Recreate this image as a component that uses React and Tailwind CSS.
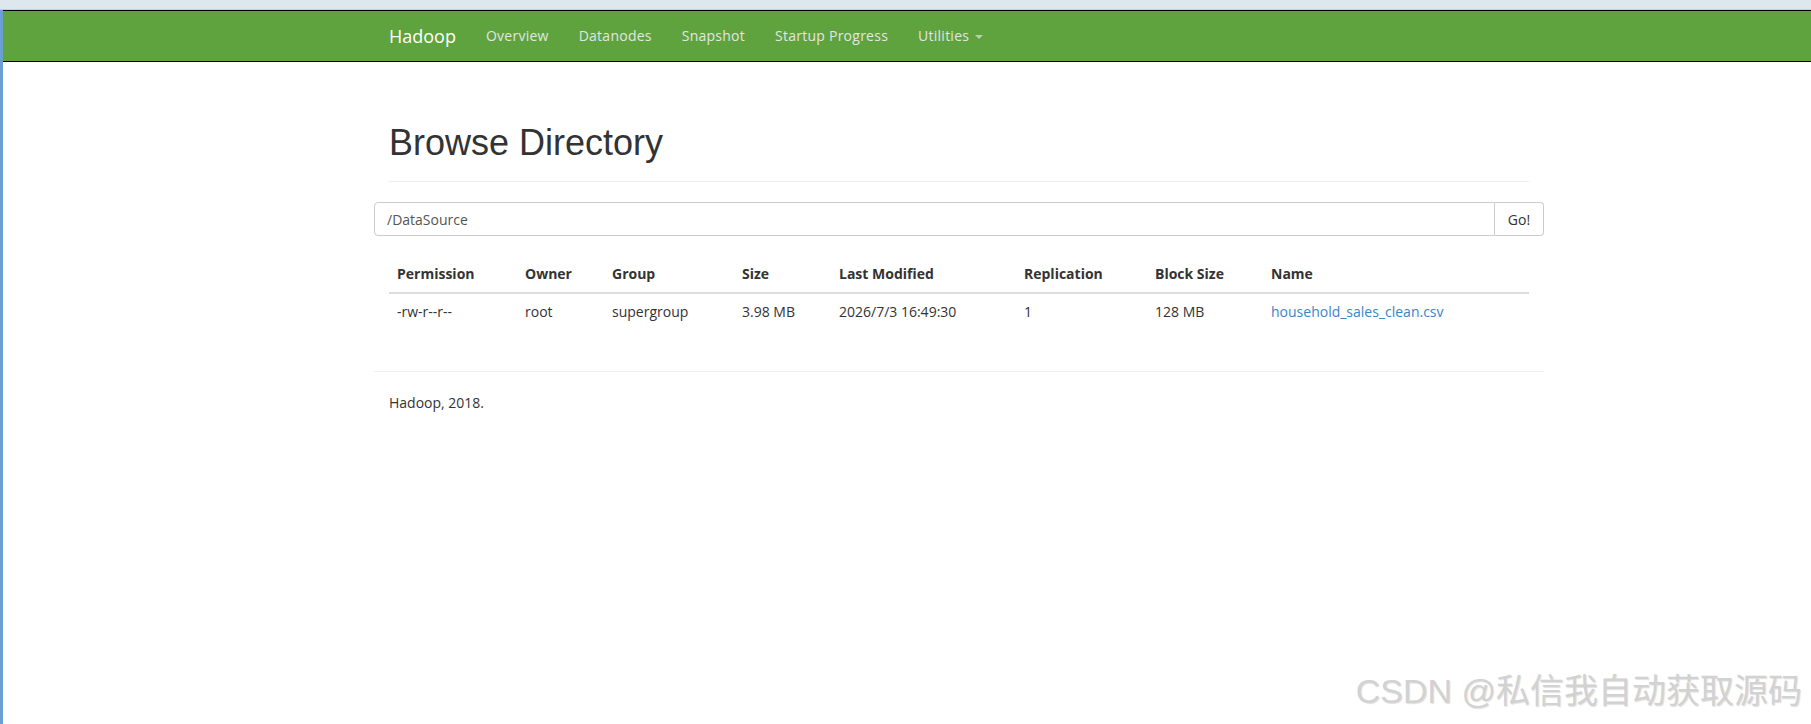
import React from 'react';

const navLinks = ['Overview', 'Datanodes', 'Snapshot', 'Startup Progress'];

const columns = [
  { label: 'Permission', w: 'w-[128px]' },
  { label: 'Owner', w: 'w-[87px]' },
  { label: 'Group', w: 'w-[130px]' },
  { label: 'Size', w: 'w-[97px]' },
  { label: 'Last Modified', w: 'w-[185px]' },
  { label: 'Replication', w: 'w-[131px]' },
  { label: 'Block Size', w: 'w-[116px]' },
  { label: 'Name', w: 'w-[266px]' },
];

const files = [
  {
    permission: '-rw-r--r--',
    owner: 'root',
    group: 'supergroup',
    size: '3.98 MB',
    modified: '2026/7/3 16:49:30',
    replication: '1',
    blockSize: '128 MB',
    name: 'household_sales_clean.csv',
  },
];

const App = () => {
  return (
    <div className="relative h-[724px] w-full overflow-hidden bg-white font-['Open_Sans',sans-serif] text-[14px] text-[#333]">
      {/* window chrome strip */}
      <div className="h-[10px] border-b border-[#c6ced6] bg-[#dfe7ee]"></div>

      <div className="flex h-[714px]">
        <div className="w-[3px] bg-[#6a9fd5]"></div>

        <div className="flex-1">
          {/* navbar */}
          <div className="h-[52px] border-y border-black bg-[#5fa33e]">
            <div className="ml-[371px] flex h-[50px] w-[1170px] items-center">
              <a className="px-[15px] text-[18px] leading-[20px] text-white">Hadoop</a>
              <ul className="flex items-center tracking-[0.25px]">
                {navLinks.map((l) => (
                  <li key={l} className="px-[15px] leading-[20px] text-[#e4e4e4]">
                    {l}
                  </li>
                ))}
                <li className="flex items-center px-[15px] leading-[20px] text-[#e4e4e4]">
                  Utilities
                  <span className="ml-[6px] mt-[2px] h-0 w-0 border-x-[4px] border-t-[4px] border-x-transparent border-t-[#b9cfae]"></span>
                </li>
              </ul>
            </div>
          </div>

          {/* content */}
          <div className="ml-[371px] w-[1170px]">
            <div className="mx-[15px] mt-[61px] mb-[20px] border-b border-[#eee] pb-[18px]">
              <h1 className="font-['Liberation_Sans',Arial,sans-serif] text-[36px] leading-[40px] text-[#333]">
                Browse Directory
              </h1>
            </div>

            <div className="flex h-[34px]">
              <div className="flex flex-1 items-center rounded-l-[4px] border border-[#ccc] px-[12px] text-[#555]">
                /DataSource
              </div>
              <button className="w-[49px] rounded-r-[4px] border border-l-0 border-[#ccc] bg-white text-[#333]">
                Go!
              </button>
            </div>

            <div className="mx-[15px] mt-[20px] mb-[41px]">
              <table className="w-full table-fixed border-collapse text-left">
                <colgroup>
                  {columns.map((c) => (
                    <col key={c.label} className={c.w} />
                  ))}
                </colgroup>
                <thead>
                  <tr>
                    {columns.map((c) => (
                      <th key={c.label} className="border-b-2 border-[#ddd] p-[8px] font-bold leading-[20px]">
                        {c.label}
                      </th>
                    ))}
                  </tr>
                </thead>
                <tbody>
                  {files.map((f) => (
                    <tr key={f.name}>
                      <td className="p-[8px] leading-[20px]">{f.permission}</td>
                      <td className="p-[8px] leading-[20px]">{f.owner}</td>
                      <td className="p-[8px] leading-[20px]">{f.group}</td>
                      <td className="p-[8px] leading-[20px]">{f.size}</td>
                      <td className="p-[8px] leading-[20px]">{f.modified}</td>
                      <td className="p-[8px] leading-[20px]">{f.replication}</td>
                      <td className="p-[8px] leading-[20px]">{f.blockSize}</td>
                      <td className="p-[8px] leading-[20px]">
                        <a className="text-[#3a85c6]">{f.name}</a>
                      </td>
                    </tr>
                  ))}
                </tbody>
              </table>
            </div>

            <div className="border-t border-[#eee] pt-[21px]">
              <p className="px-[15px] leading-[20px]">Hadoop, 2018.</p>
            </div>
          </div>
        </div>
      </div>

      {/* CSDN watermark */}
      <div className="absolute right-[9px] bottom-[13px] font-['Liberation_Sans','Noto_Sans_CJK_SC',sans-serif] text-[34px] leading-[40px] text-[#d2d2d2] [text-shadow:1px_1px_1px_rgba(0,0,0,0.12)]">
        CSDN @私信我自动获取源码
      </div>
    </div>
  );
};

export default App;
